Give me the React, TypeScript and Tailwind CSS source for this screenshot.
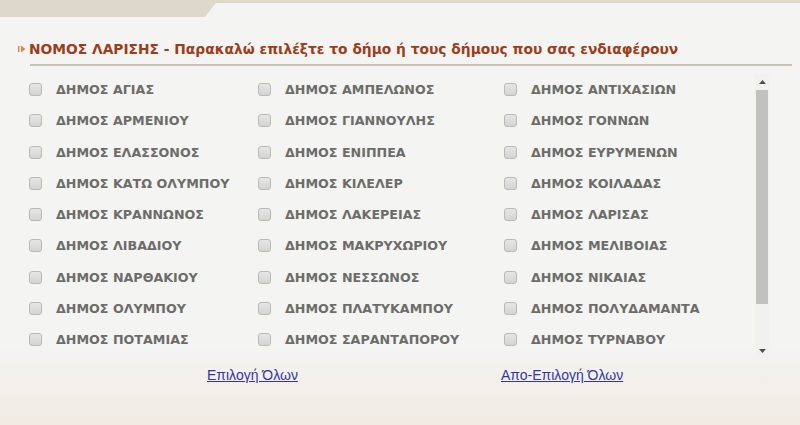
import React from 'react';

const municipalities = [
  ['ΔΗΜΟΣ ΑΓΙΑΣ', 'ΔΗΜΟΣ ΑΜΠΕΛΩΝΟΣ', 'ΔΗΜΟΣ ΑΝΤΙΧΑΣΙΩΝ'],
  ['ΔΗΜΟΣ ΑΡΜΕΝΙΟΥ', 'ΔΗΜΟΣ ΓΙΑΝΝΟΥΛΗΣ', 'ΔΗΜΟΣ ΓΟΝΝΩΝ'],
  ['ΔΗΜΟΣ ΕΛΑΣΣΟΝΟΣ', 'ΔΗΜΟΣ ΕΝΙΠΠΕΑ', 'ΔΗΜΟΣ ΕΥΡΥΜΕΝΩΝ'],
  ['ΔΗΜΟΣ ΚΑΤΩ ΟΛΥΜΠΟΥ', 'ΔΗΜΟΣ ΚΙΛΕΛΕΡ', 'ΔΗΜΟΣ ΚΟΙΛΑΔΑΣ'],
  ['ΔΗΜΟΣ ΚΡΑΝΝΩΝΟΣ', 'ΔΗΜΟΣ ΛΑΚΕΡΕΙΑΣ', 'ΔΗΜΟΣ ΛΑΡΙΣΑΣ'],
  ['ΔΗΜΟΣ ΛΙΒΑΔΙΟΥ', 'ΔΗΜΟΣ ΜΑΚΡΥΧΩΡΙΟΥ', 'ΔΗΜΟΣ ΜΕΛΙΒΟΙΑΣ'],
  ['ΔΗΜΟΣ ΝΑΡΘΑΚΙΟΥ', 'ΔΗΜΟΣ ΝΕΣΣΩΝΟΣ', 'ΔΗΜΟΣ ΝΙΚΑΙΑΣ'],
  ['ΔΗΜΟΣ ΟΛΥΜΠΟΥ', 'ΔΗΜΟΣ ΠΛΑΤΥΚΑΜΠΟΥ', 'ΔΗΜΟΣ ΠΟΛΥΔΑΜΑΝΤΑ'],
  ['ΔΗΜΟΣ ΠΟΤΑΜΙΑΣ', 'ΔΗΜΟΣ ΣΑΡΑΝΤΑΠΟΡΟΥ', 'ΔΗΜΟΣ ΤΥΡΝΑΒΟΥ'],
];

const Check = ({ label }: { label: string }) => (
  <label className="flex items-center h-full cursor-pointer">
    <span className="w-[13px] h-[13px] rounded-[3px] border border-[#b9b9b9] bg-gradient-to-b from-[#e6e6e6] to-[#d4d4d4] shrink-0" />
    <span className="ml-[14px] text-[12.7px] font-bold text-[#6c6c68] whitespace-nowrap">{label}</span>
  </label>
);

export default function App() {
  return (
    <div
      className="w-[800px] h-[425px] overflow-hidden bg-[#f4f4f3] relative"
      style={{ fontFamily: '"DejaVu Sans", Verdana, sans-serif' }}
    >
      {/* warm texture near the bottom */}
      <div className="absolute inset-x-0 bottom-0 h-[80px] bg-gradient-to-b from-transparent to-[#f1ebe2] pointer-events-none" />

      {/* top band */}
      <div className="relative h-[17px]">
        <div className="absolute inset-x-0 top-0 h-[3px] bg-[#ddd8c9]" />
        <div className="absolute left-0 top-0 h-[17px] w-[218px] bg-[#ddd8c9] [clip-path:polygon(0_0,100%_0,94%_100%,0_100%)]" />
      </div>

      {/* title */}
      <div className="relative mt-[23px] flex items-center pl-[18px] h-[18px]">
        <svg width="8" height="8" viewBox="0 0 8 8" className="mr-[3px]">
          <rect x="0" y="1" width="1.5" height="6" fill="#d9874f" />
          <path d="M3 0.5 L7.5 4 L3 7.5 Z" fill="#d9874f" />
        </svg>
        <h1 className="text-[13.8px] font-bold text-[#9c3d1c] whitespace-nowrap">
          ΝΟΜΟΣ ΛΑΡΙΣΗΣ - Παρακαλώ επιλέξτε το δήμο ή τους δήμους που σας ενδιαφέρουν
        </h1>
      </div>
      <div className="relative mt-[6px] ml-[30px] mr-[8px] border-b-2 border-[#c9c2b3]" />

      {/* list with scrollbar */}
      <div className="relative mt-[8px] flex h-[284px]">
        <div className="flex-1 pl-[29px]">
          {municipalities.map((row, i) => (
            <div key={i} className="grid grid-cols-[229px_246px_1fr] h-[31.25px]">
              {row.map((m) => (
                <Check key={m} label={m} />
              ))}
            </div>
          ))}
        </div>
        <div className="w-[14px] mr-[31px] flex flex-col items-center bg-[#f1f1f1]">
          <div className="h-[16px] w-full flex items-center justify-center">
            <svg width="7" height="4" viewBox="0 0 7 4">
              <path d="M0 4 L3.5 0 L7 4 Z" fill="#505050" />
            </svg>
          </div>
          <div className="w-[12px] h-[214px] bg-[#c1c1c1]" />
          <div className="flex-1" />
          <div className="h-[14px] w-full flex items-center justify-center">
            <svg width="7" height="4" viewBox="0 0 7 4">
              <path d="M0 0 L7 0 L3.5 4 Z" fill="#505050" />
            </svg>
          </div>
        </div>
      </div>

      {/* select / deselect */}
      <div
        className="relative mt-[7px] flex text-[14px] text-[#3535a8]"
        style={{ fontFamily: '"Liberation Sans", Arial, sans-serif' }}
      >
        <a href="#" className="ml-[207px] w-[294px] underline">Επιλογή Όλων</a>
        <a href="#" className="underline">Απο-Επιλογή Όλων</a>
      </div>
    </div>
  );
}
